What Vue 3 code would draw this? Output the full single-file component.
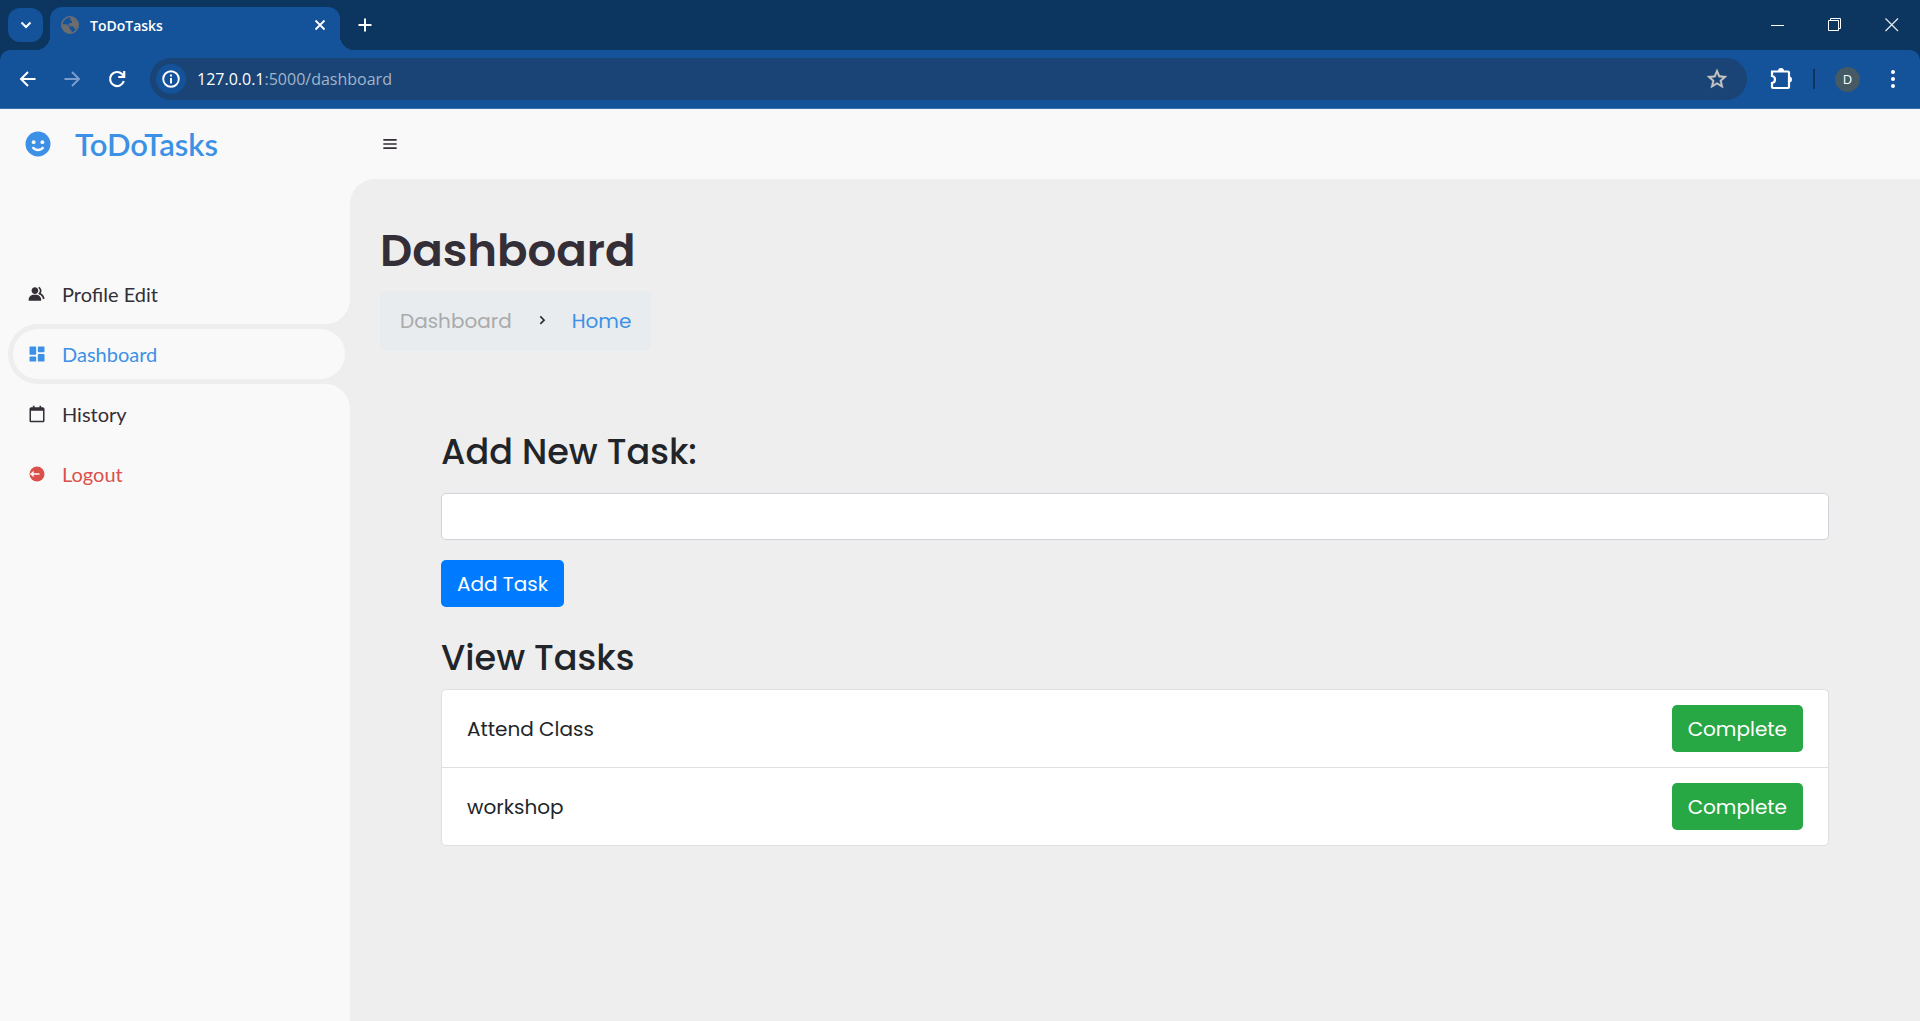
<script setup>
import { ref } from 'vue'

const menu = [
  { label: 'Profile Edit', icon: 'group' },
  { label: 'Dashboard', icon: 'dashboard', active: true },
  { label: 'History', icon: 'calendar' },
  { label: 'Logout', icon: 'logout', danger: true },
]

const tasks = ref([
  { id: 1, name: 'Attend Class' },
  { id: 2, name: 'workshop' },
])
const newTask = ref('')
let nextId = 3

function addTask() {
  const name = newTask.value.trim()
  if (!name) return
  tasks.value.push({ id: nextId++, name })
  newTask.value = ''
}

function complete(id) {
  tasks.value = tasks.value.filter((t) => t.id !== id)
}
</script>

<template>
  <div class="window">
    <header class="chrome">
      <div class="tabstrip">
        <button class="tab-list" aria-label="Search tabs">
          <svg width="14" height="14" viewBox="0 0 14 14"><path d="M2.500 4.500L7 9l4.500-4.500" fill="none" stroke="#fff" stroke-width="2" /></svg>
        </button>
        <div class="tab">
          <svg class="globe" width="18" height="18" viewBox="0 0 18 18">
            <circle cx="9" cy="9" r="8.200" fill="none" stroke="#6b6d70" stroke-width="1.600" />
            <path d="M1 8l5 .5 2.500 2.500v2l2 1v3C5 17.500 1 14 1 8zM10 1l4 2 3.500 5-1 4.500-3 .5-1-2.500H9.500L7 8.500l2-1.500h2V5L9 4z" fill="#6b6d70" />
          </svg>
          <span class="tab-title">ToDoTasks</span>
          <button class="icon-btn" aria-label="Close tab">
            <svg width="12" height="12" viewBox="0 0 12 12"><path d="M1.500 1.500l9 9M10.500 1.500l-9 9" stroke="#fff" stroke-width="1.800" /></svg>
          </button>
        </div>
        <button class="icon-btn new-tab" aria-label="New tab">
          <svg width="14" height="14" viewBox="0 0 14 14"><path d="M7 .5v13M.5 7h13" stroke="#fff" stroke-width="2" /></svg>
        </button>
        <div class="window-controls">
          <button class="icon-btn" aria-label="Minimize">
            <svg width="14" height="14" viewBox="0 0 14 14"><path d="M0 7.500h13" stroke="#fff" /></svg>
          </button>
          <button class="icon-btn" aria-label="Restore">
            <svg width="14" height="14" viewBox="0 0 14 14"><path d="M.5 2.500h10v10H.5zM2.500 2.500V.5h10v10h-2" fill="none" stroke="#fff" /></svg>
          </button>
          <button class="icon-btn" aria-label="Close">
            <svg width="14" height="14" viewBox="0 0 14 14"><path d="M.5 .5l12.500 12.500M13 .5L.5 13" stroke="#e6ebf2" stroke-width="1.200" /></svg>
          </button>
        </div>
      </div>

      <div class="toolbar">
        <button class="icon-btn" aria-label="Back">
          <svg width="20" height="20" viewBox="0 0 20 20"><path d="M17.500 10H3.500M10 3l-7 7 7 7" fill="none" stroke="#fff" stroke-width="2" /></svg>
        </button>
        <button class="icon-btn" aria-label="Forward">
          <svg width="20" height="20" viewBox="0 0 20 20"><path d="M2.500 10h14M10 3l7 7-7 7" fill="none" stroke="#7a9dcb" stroke-width="2" /></svg>
        </button>
        <button class="icon-btn" aria-label="Reload">
          <svg width="20" height="20" viewBox="0 0 20 20"><path d="M17.800 12A7 7 0 1 1 16 5l2 2.300M18.200 2v6h-6" fill="none" stroke="#fff" stroke-width="2.200" /></svg>
        </button>
        <div class="address">
          <span class="site-info">
            <svg width="18" height="18" viewBox="0 0 18 18">
              <circle cx="9" cy="9" r="7.800" fill="none" stroke="#fff" stroke-width="1.900" />
              <path d="M9 4.500v2M9 8v5.500" stroke="#fff" stroke-width="1.900" />
            </svg>
          </span>
          <span class="url"><b>127.0.0.1</b>:5000/dashboard</span>
          <button class="icon-btn" aria-label="Bookmark">
            <svg width="24" height="24" viewBox="0 0 24 24"><path d="M22 9.240l-7.190-.62L12 2 9.190 8.630 2 9.240l5.460 4.730L5.820 21 12 17.270 18.180 21l-1.630-7.030L22 9.240zM12 15.400l-3.760 2.270 1-4.280-3.320-2.880 4.380-.38L12 6.100l1.710 4.040 4.380.38-3.320 2.880 1 4.280L12 15.400z" fill="#c9c7c5" stroke="#c9c7c5" stroke-width=".4" /></svg>
          </button>
        </div>
        <button class="icon-btn" aria-label="Extensions">
          <svg width="24" height="24" viewBox="0 0 24 24">
            <path d="M3 4.500h16a1 1 0 0 1 1 1V20a1 1 0 0 1-1 1H4a1 1 0 0 1-1-1v-4c4-.5 4-6.500 0-7V4.500z" fill="none" stroke="#fff" stroke-width="2.200" />
            <path d="M9 4a3 3 0 0 1 6 0zM20 9.500a3 3 0 0 1 0 6z" fill="#fff" />
          </svg>
        </button>
        <span class="divider"></span>
        <button class="avatar" aria-label="Profile">D</button>
        <button class="icon-btn" aria-label="Browser menu">
          <svg width="6" height="20" viewBox="0 0 6 20" fill="#fff"><circle cx="3" cy="3" r="2" /><circle cx="3" cy="10" r="2" /><circle cx="3" cy="17" r="2" /></svg>
        </button>
      </div>
    </header>

    <div class="page">
      <aside class="sidebar">
        <a href="#" class="brand">
          <svg width="30" height="30" viewBox="0 0 24 24">
            <circle cx="12" cy="12" r="10" fill="#3c91e6" />
            <circle cx="8.500" cy="10.500" r="1.500" fill="#f9f9f9" /><circle cx="15.500" cy="10.500" r="1.500" fill="#f9f9f9" />
            <path d="M7.700 14.500c2 3 6.600 3 8.600 0" fill="none" stroke="#f9f9f9" stroke-width="1.900" />
          </svg>
          <span>ToDoTasks</span>
        </a>
        <ul class="menu">
          <li v-for="item in menu" :key="item.label" :class="{ active: item.active, danger: item.danger }">
            <a href="#">
              <svg width="20" height="20" viewBox="0 0 24 24" fill="currentColor">
                <template v-if="item.icon === 'group'">
                  <path d="M9.500 12c2.206 0 4-1.794 4-4s-1.794-4-4-4-4 1.794-4 4 1.794 4 4 4zm1.500 1H8c-3.309 0-6 2.691-6 6v1h15v-1c0-3.309-2.691-6-6-6z" />
                  <path d="M16.604 11.048a5.670 5.670 0 0 0 .751-3.440c-.179-1.784-1.175-3.361-2.803-4.440l-1.105 1.666c1.119.742 1.800 1.799 1.918 2.974a3.693 3.693 0 0 1-1.072 2.986l-1.192 1.192 1.618.475C18.951 13.701 19 17.957 19 18h2c0-1.789-.956-5.285-4.396-6.952z" />
                </template>
                <path v-else-if="item.icon === 'dashboard'" d="M4 13h6a1 1 0 0 0 1-1V4a1 1 0 0 0-1-1H4a1 1 0 0 0-1 1v8a1 1 0 0 0 1 1zm-1 7a1 1 0 0 0 1 1h6a1 1 0 0 0 1-1v-4a1 1 0 0 0-1-1H4a1 1 0 0 0-1 1v4zm10 0a1 1 0 0 0 1 1h6a1 1 0 0 0 1-1v-7a1 1 0 0 0-1-1h-6a1 1 0 0 0-1 1v7zm1-10h6a1 1 0 0 0 1-1V4a1 1 0 0 0-1-1h-6a1 1 0 0 0-1 1v5a1 1 0 0 0 1 1z" />
                <path v-else-if="item.icon === 'calendar'" fill-rule="evenodd" d="M19 4h-2V2h-2v2H9V2H7v2H5c-1.103 0-2 .897-2 2v14c0 1.103.897 2 2 2h14c1.103 0 2-.897 2-2V6c0-1.103-.897-2-2-2zM4.800 20.200V8h14.400v12.200z" />
                <template v-else>
                  <circle cx="12" cy="12" r="9" />
                  <path d="M3.500 12L8 8v3h7v2H8v3z" fill="#f9f9f9" />
                </template>
              </svg>
              <span>{{ item.label }}</span>
            </a>
          </li>
        </ul>
      </aside>

      <div class="content">
        <nav class="topbar">
          <button class="icon-btn" aria-label="Toggle sidebar">
            <svg width="20" height="20" viewBox="0 0 24 24"><path d="M4 6h16v2H4zm0 5h16v2H4zm0 5h16v2H4z" fill="#342e37" /></svg>
          </button>
        </nav>
        <main>
          <h1>Dashboard</h1>
          <ul class="breadcrumb">
            <li><a href="#" class="muted">Dashboard</a></li>
            <li class="sep">
              <svg width="20" height="20" viewBox="0 0 24 24"><path d="M10 6.500l4.500 4.500L10 15.500" fill="none" stroke="#342e37" stroke-width="2" /></svg>
            </li>
            <li><a href="#">Home</a></li>
          </ul>

          <div class="tasks">
            <form @submit.prevent="addTask">
              <h2><label for="task">Add New Task:</label></h2>
              <input id="task" v-model="newTask" type="text" />
              <button type="submit" class="btn primary">Add Task</button>
            </form>
            <h2>View Tasks</h2>
            <ul class="list">
              <li v-for="task in tasks" :key="task.id">
                <span>{{ task.name }}</span>
                <button type="button" class="btn success" @click="complete(task.id)">Complete</button>
              </li>
            </ul>
          </div>
        </main>
      </div>
    </div>
  </div>
</template>

<style>
body {
  margin: 0;
}
</style>

<style scoped>
* {
  box-sizing: border-box;
}
button,
input {
  font: inherit;
}
ul {
  list-style: none;
  margin: 0;
  padding: 0;
}
a {
  text-decoration: none;
}
svg {
  display: block;
  flex: none;
}
.window {
  display: flex;
  flex-direction: column;
  min-height: 100vh;
  font-family: Poppins, Inter, sans-serif;
  font-size: 20px;
}
.icon-btn {
  display: flex;
  align-items: center;
  justify-content: center;
  padding: 0;
  border: 0;
  background: none;
  cursor: pointer;
}

/* Browser chrome */
.chrome {
  background: #0c3560;
  font-family: "Segoe UI", "Open Sans", sans-serif;
}
.tabstrip {
  display: flex;
  align-items: center;
  height: 50px;
  padding: 0 21px 0 8px;
}
.tab-list {
  display: flex;
  align-items: center;
  justify-content: center;
  width: 35px;
  height: 34px;
  padding: 0;
  border: 0;
  border-radius: 12px;
  background: #14529a;
}
.tab {
  position: relative;
  display: flex;
  align-items: center;
  align-self: flex-end;
  width: 290px;
  height: 43px;
  margin-left: 7px;
  padding: 0 14px 7px 11px;
  border-radius: 12px 12px 0 0;
  background: #14529a;
}
.tab::before,
.tab::after {
  content: "";
  position: absolute;
  bottom: 0;
  width: 14px;
  height: 14px;
}
.tab::before {
  right: 100%;
  background: radial-gradient(circle at 0 0, transparent 14px, #14529a 14px);
}
.tab::after {
  left: 100%;
  background: radial-gradient(circle at 100% 0, transparent 14px, #14529a 14px);
}
.tab-title {
  flex: 1;
  margin-left: 11px;
  color: #fff;
  font-size: 14px;
  font-weight: 600;
}
.new-tab {
  margin-left: 18px;
}
.window-controls {
  display: flex;
  gap: 43px;
  margin-left: auto;
}
.toolbar {
  display: flex;
  align-items: center;
  height: 59px;
  padding: 0 24px 0 18px;
  border-bottom: 1px solid #3a70ae;
  border-radius: 10px 10px 0 0;
  background: #14529a;
}
.toolbar > .icon-btn + .icon-btn {
  margin-left: 24px;
}
.address {
  display: flex;
  flex: 1;
  align-items: center;
  height: 42px;
  margin: 0 22px 0 24px;
  padding: 0 18px 0 6px;
  border-radius: 21px;
  background: #194475;
}
.site-info {
  display: flex;
  align-items: center;
  justify-content: center;
  width: 30px;
  height: 30px;
  border-radius: 50%;
  background: #14529a;
}
.url {
  flex: 1;
  margin-left: 11px;
  color: #a3b4c8;
  font-size: 16px;
}
.url b {
  color: #fff;
  font-weight: 400;
}
.divider {
  width: 2px;
  height: 20px;
  margin: 0 20px;
  background: #0c3560;
}
.avatar {
  width: 25px;
  height: 25px;
  margin-right: 30px;
  padding: 0;
  border: 0;
  border-radius: 50%;
  background: #455a64;
  color: #fff;
  font-size: 13px;
  line-height: 25px;
}

/* Page */
.page {
  display: flex;
  flex: 1;
  background: #eee;
}
.sidebar {
  flex: none;
  width: 350px;
  background: #f9f9f9;
  font-family: Lato, sans-serif;
}
.brand {
  display: flex;
  align-items: center;
  height: 70px;
  padding-left: 23px;
  color: #3c91e6;
  font-size: 31px;
  font-weight: 600;
}
.brand span {
  margin-left: 22px;
}
.menu {
  margin-top: 85px;
}
.menu li {
  position: relative;
  height: 60px;
  margin-left: 8px;
  padding: 5px;
  border-radius: 30px 0 0 30px;
}
.menu a {
  display: flex;
  align-items: center;
  gap: 15px;
  height: 50px;
  padding-left: 14px;
  border-radius: 25px;
  background: #f9f9f9;
  color: #342e37;
}
.menu .active {
  background: #eee;
}
.menu .active a {
  color: #3c91e6;
}
.menu .danger a {
  color: #db504a;
}
.menu .active::before,
.menu .active::after {
  content: "";
  position: absolute;
  right: 0;
  width: 25px;
  height: 25px;
}
.menu .active::before {
  bottom: 100%;
  background: radial-gradient(circle at 0 0, transparent 25px, #eee 25px);
}
.menu .active::after {
  top: 100%;
  z-index: 1;
  background: radial-gradient(circle at 0 100%, transparent 25px, #eee 25px);
}
.content {
  display: flex;
  flex: 1;
  flex-direction: column;
  min-width: 0;
  background: #f9f9f9;
}
.topbar {
  display: flex;
  align-items: center;
  height: 70px;
  padding: 0 30px;
}
main {
  flex: 1;
  padding: 45px 30px;
  border-top-left-radius: 25px;
  background: #eee;
}
h1 {
  margin: 0 0 13px;
  color: #342e37;
  font-size: 45px;
  font-weight: 600;
  line-height: 54px;
}
.breadcrumb {
  display: flex;
  align-items: center;
  width: fit-content;
  height: 60px;
  padding: 0 20px;
  border-radius: 5px;
  background: #e9ecef;
}
.breadcrumb a {
  color: #3c91e6;
}
.breadcrumb .muted {
  color: #aaa;
}
.sep {
  margin: 0 20px;
}
.tasks {
  margin: 80px 61px 0;
  color: #212529;
}
h2 {
  margin: 0;
  font-size: 35px;
  font-weight: 500;
  line-height: 42px;
}
input {
  display: block;
  width: 100%;
  height: 47px;
  margin: 20px 0;
  padding: 8px 15px;
  border: 1px solid #ced4da;
  border-radius: 5px;
  background: #fff;
}
.btn {
  height: 47px;
  padding: 0 16px;
  border: 0;
  border-radius: 5px;
  color: #fff;
  cursor: pointer;
}
.primary {
  display: block;
  margin-bottom: 30px;
  background: #007bff;
}
.success {
  background: #28a745;
}
.list {
  margin-top: 10px;
  border: 1px solid #dfdfdf;
  border-radius: 5px;
  background: #fff;
}
.list li {
  display: flex;
  align-items: center;
  justify-content: space-between;
  padding: 15px 25px;
}
.list li + li {
  border-top: 1px solid #dfdfdf;
}
</style>
